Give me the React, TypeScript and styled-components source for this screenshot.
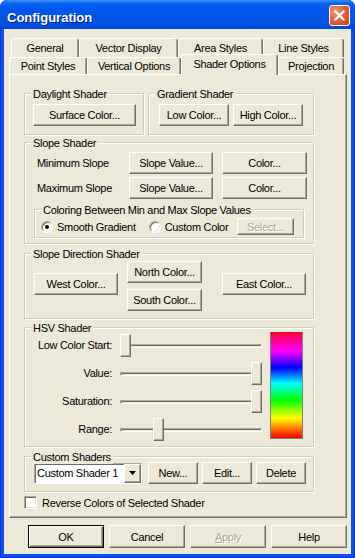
import React from "react";
import styled, { createGlobalStyle, css } from "styled-components";

const FACE = "#ECE9D8";
const SHADOW = "#ACA899";
const DARK = "#716F64";
const ETCH = "#D0D0BF";

const GlobalStyle = createGlobalStyle`
  * { box-sizing: border-box; }
  html, body { margin: 0; padding: 0; background: #ffffff; }
  body {
    font-family: "Liberation Sans", Arial, sans-serif;
    font-size: 11px;
    letter-spacing: -0.3px;
    color: #000;
  }
`;

const Window = styled.div`
  width: 355px;
  height: 558px;
  display: flex;
  flex-direction: column;
  background: #0A53E2;
  box-shadow: inset 0 0 0 1px #0831D9;
  border-radius: 7px 7px 0 0;
  overflow: hidden;
`;

const TitleBar = styled.div`
  flex: none;
  height: 29px;
  display: flex;
  align-items: flex-start;
  justify-content: space-between;
  padding: 0 5px 0 7px;
  border-radius: 7px 7px 0 0;
  background: linear-gradient(
    to bottom,
    #3D95FF 0px,
    #0A66F5 3px,
    #0058EE 7px,
    #0055E8 15px,
    #0052E2 24px,
    #0047D4 29px
  );
`;

const Title = styled.span`
  margin-top: 10px;
  font: bold 13px/15px "Liberation Sans", Arial, sans-serif;
  letter-spacing: 0;
  color: #fff;
  text-shadow: 1px 1px #0A1883;
`;

const CloseBtn = styled.div`
  margin-top: 5px;
  width: 21px;
  height: 21px;
  border: 1px solid #fff;
  border-radius: 3px;
  background: radial-gradient(circle at 30% 30%, #F29A7E 0%, #E2623F 45%, #C8401D 100%);
  display: flex;
  align-items: center;
  justify-content: center;
`;

const Client = styled.div`
  flex: 1;
  margin: 0 4px 4px 4px;
  background: ${FACE};
  display: flex;
  flex-direction: column;
  padding: 9px 4px 0 5px;
`;

const TabRow = styled.div<{ $indent: number }>`
  display: flex;
  padding-left: ${(p) => p.$indent}px;
`;

const Tab = styled.div<{ $w: number; $h: number; $active?: boolean }>`
  flex: none;
  width: ${(p) => p.$w}px;
  height: ${(p) => p.$h}px;
  display: flex;
  align-items: center;
  justify-content: center;
  white-space: nowrap;
  background: ${FACE};
  border-top: 1px solid #fff;
  border-left: 1px solid #fff;
  border-right: 1px solid ${DARK};
  border-radius: 3px 3px 0 0;
  box-shadow: inset -1px 0 ${SHADOW};
  ${(p) =>
    p.$active &&
    css`
      position: relative;
      z-index: 1;
      margin-top: -3px;
      margin-bottom: -1px;
      padding-bottom: 2px;
    `}
`;

const Panel = styled.div`
  flex: none;
  height: 444px;
  display: flex;
  flex-direction: column;
  padding: 18px 0 0 14px;
  border: 1px solid;
  border-color: #fff ${DARK} ${DARK} #fff;
  box-shadow: inset -1px -1px ${SHADOW};
`;

const GroupRow = styled.div`
  display: flex;
  gap: 4px;
`;

const Group = styled.div<{ $h: number; $w?: number; $mt?: number }>`
  position: relative;
  flex: none;
  width: ${(p) => p.$w ?? 290}px;
  height: ${(p) => p.$h}px;
  margin-top: ${(p) => p.$mt ?? 0}px;
  border: 1px solid ${ETCH};
  box-shadow: inset 1px 1px #fff, 1px 1px #fff;
`;

const Legend = styled.span`
  position: absolute;
  top: -6px;
  left: 6px;
  padding: 0 2px;
  line-height: 13px;
  background: ${FACE};
  white-space: nowrap;
`;

const Btn = styled.button<{ $w: number; $h?: number; $default?: boolean }>`
  flex: none;
  width: ${(p) => p.$w}px;
  height: ${(p) => p.$h ?? 22}px;
  margin: 0;
  padding: 0;
  font-family: "Liberation Sans", Arial, sans-serif;
  font-size: 11px;
  letter-spacing: inherit;
  color: #000;
  white-space: nowrap;
  background: ${FACE};
  border: 1px solid;
  border-color: #fff ${DARK} ${DARK} #fff;
  box-shadow: inset -1px -1px ${SHADOW};
  ${(p) =>
    p.$default &&
    css`
      border-color: #000;
      box-shadow: inset 1px 1px #fff, inset -1px -1px ${DARK}, inset -2px -2px ${SHADOW};
    `}
  &:disabled {
    color: ${SHADOW};
    text-shadow: 1px 1px #fff;
  }
`;

const ButtonLine = styled.div<{ $pt: number; $pl: number; $gap: number }>`
  display: flex;
  align-items: center;
  gap: ${(p) => p.$gap}px;
  padding: ${(p) => p.$pt}px 0 0 ${(p) => p.$pl}px;
`;

const SlopeBody = styled.div`
  display: flex;
  flex-direction: column;
  padding: 9px 0 0 9px;
`;

const SlopeGrid = styled.div`
  display: grid;
  grid-template-columns: 86px 84px 85px;
  grid-auto-rows: 22px;
  column-gap: 9px;
  row-gap: 3px;
  align-items: center;
`;

const RowLabel = styled.span`
  padding-left: 3px;
  white-space: nowrap;
`;

const RadioLine = styled.div`
  display: flex;
  align-items: center;
  padding: 8px 9px 0 6px;
`;

const RadioOption = styled.label<{ $mr?: number }>`
  display: flex;
  align-items: center;
  gap: 4px;
  margin-right: ${(p) => p.$mr ?? 0}px;
  white-space: nowrap;
`;

const RadioDot = styled.span<{ $checked?: boolean }>`
  position: relative;
  flex: none;
  width: 12px;
  height: 12px;
  border-radius: 50%;
  background: #fff;
  border: 1px solid;
  border-color: ${SHADOW} #fff #fff ${SHADOW};
  box-shadow: inset 1px 1px ${DARK}, inset -1px -1px ${FACE};
  ${(p) =>
    p.$checked &&
    css`
      &::after {
        content: "";
        position: absolute;
        left: 3px;
        top: 3px;
        width: 4px;
        height: 4px;
        border-radius: 50%;
        background: #000;
      }
    `}
`;

const Spacer = styled.div`
  flex: 1;
`;

const DirectionBody = styled.div`
  display: flex;
  align-items: flex-start;
  padding: 7px 0 0 9px;
`;

const SideSlot = styled.div`
  margin-top: 12px;
`;

const CenterStack = styled.div`
  display: flex;
  flex-direction: column;
  gap: 6px;
  margin: 0 20px 0 9px;
`;

const HsvBody = styled.div`
  display: flex;
  align-items: flex-start;
  gap: 8px;
  padding-top: 3px;
`;

const SliderGrid = styled.div`
  display: grid;
  grid-template-columns: 87px 142px;
  grid-auto-rows: 28px;
  column-gap: 8px;
  align-items: center;
`;

const SliderLabel = styled.span`
  text-align: right;
  white-space: nowrap;
`;

const Slider = styled.div`
  position: relative;
  height: 28px;
  padding-top: 13px;
`;

const Track = styled.div`
  height: 4px;
  border: 1px solid;
  border-color: ${SHADOW} #fff #fff ${SHADOW};
  box-shadow: inset 1px 1px ${DARK};
  background: ${FACE};
`;

const Thumb = styled.div`
  position: absolute;
  top: 3px;
  width: 11px;
  height: 23px;
  background: ${FACE};
  border: 1px solid;
  border-color: #fff ${DARK} ${DARK} #fff;
  box-shadow: inset -1px -1px ${SHADOW};
`;

const ColorBar = styled.div`
  flex: none;
  width: 33px;
  height: 107px;
  margin-top: 1px;
  border: 1px solid #808080;
  border-top-color: #ff0000;
  background: linear-gradient(
    to bottom,
    #ff0040 0%,
    #ff00ff 17%,
    #0000ff 33%,
    #00ffff 48%,
    #00ff00 64%,
    #ffff00 81%,
    #ff0000 100%
  );
`;

const Combo = styled.div`
  flex: none;
  width: 108px;
  height: 21px;
  margin-right: 2px;
  display: flex;
  align-items: flex-start;
  justify-content: space-between;
  background: #fff;
  border: 1px solid;
  border-color: ${SHADOW} #fff #fff ${SHADOW};
  box-shadow: inset 1px 1px ${DARK};
`;

const ComboText = styled.span`
  padding: 3px 0 0 2px;
  white-space: nowrap;
`;

const DropBtn = styled.div`
  flex: none;
  width: 17px;
  height: 19px;
  display: flex;
  align-items: center;
  justify-content: center;
  background: ${FACE};
  border: 1px solid;
  border-color: #fff ${DARK} ${DARK} #fff;
  box-shadow: inset -1px -1px ${SHADOW};
`;

const CheckRow = styled.label`
  display: flex;
  align-items: center;
  gap: 5px;
  margin-top: 4px;
  white-space: nowrap;
`;

const CheckBox = styled.span`
  flex: none;
  width: 13px;
  height: 13px;
  background: #fff;
  border: 1px solid;
  border-color: ${SHADOW} #fff #fff ${SHADOW};
  box-shadow: inset 1px 1px ${DARK}, inset -1px -1px ${FACE};
`;

const DialogButtons = styled.div`
  display: flex;
  justify-content: flex-end;
  gap: 5px;
  margin-top: 7px;
`;

const backTabs = [
  { label: "General", w: 68 },
  { label: "Vector Display", w: 99 },
  { label: "Area Styles", w: 85 },
  { label: "Line Styles", w: 81 },
];

const frontTabs = [
  { label: "Point Styles", w: 78 },
  { label: "Vertical Options", w: 94 },
  { label: "Shader Options", w: 97, active: true },
  { label: "Projection", w: 66 },
];

const sliders = [
  { label: "Low Color Start:", value: 0 },
  { label: "Value:", value: 1 },
  { label: "Saturation:", value: 1 },
  { label: "Range:", value: 0.25 },
];

const TRACK_RANGE = 142 - 11;

export default function App() {
  return (
    <>
      <GlobalStyle />
      <Window>
        <TitleBar>
          <Title>Configuration</Title>
          <CloseBtn>
            <svg width="11" height="11" viewBox="0 0 11 11">
              <path d="M1.5 1.5 L9.5 9.5 M9.5 1.5 L1.5 9.5" stroke="#fff" strokeWidth="2.2" strokeLinecap="square" />
            </svg>
          </CloseBtn>
        </TitleBar>
        <Client>
          <TabRow $indent={2}>
            {backTabs.map((t) => (
              <Tab key={t.label} $w={t.w} $h={19}>
                {t.label}
              </Tab>
            ))}
          </TabRow>
          <TabRow $indent={0}>
            {frontTabs.map((t) => (
              <Tab key={t.label} $w={t.w} $h={t.active ? 21 : 17} $active={t.active}>
                {t.label}
              </Tab>
            ))}
          </TabRow>
          <Panel>
            <GroupRow>
              <Group $w={120} $h={42}>
                <Legend>Daylight Shader</Legend>
                <ButtonLine $pt={10} $pl={8} $gap={0}>
                  <Btn $w={103}>Surface Color...</Btn>
                </ButtonLine>
              </Group>
              <Group $w={166} $h={42}>
                <Legend>Gradient Shader</Legend>
                <ButtonLine $pt={10} $pl={10} $gap={4}>
                  <Btn $w={70}>Low Color...</Btn>
                  <Btn $w={70}>High Color...</Btn>
                </ButtonLine>
              </Group>
            </GroupRow>

            <Group $h={102} $mt={7}>
              <Legend>Slope Shader</Legend>
              <SlopeBody>
                <SlopeGrid>
                  <RowLabel>Minimum Slope</RowLabel>
                  <Btn $w={84}>Slope Value...</Btn>
                  <Btn $w={85}>Color...</Btn>
                  <RowLabel>Maximum Slope</RowLabel>
                  <Btn $w={84}>Slope Value...</Btn>
                  <Btn $w={85}>Color...</Btn>
                </SlopeGrid>
                <Group $w={270} $h={29} $mt={10}>
                  <Legend>Coloring Between Min and Max Slope Values</Legend>
                  <RadioLine>
                    <RadioOption $mr={13}>
                      <RadioDot $checked />
                      Smooth Gradient
                    </RadioOption>
                    <RadioOption>
                      <RadioDot />
                      Custom Color
                    </RadioOption>
                    <Spacer />
                    <Btn $w={57} $h={17} disabled>
                      Select...
                    </Btn>
                  </RadioLine>
                </Group>
              </SlopeBody>
            </Group>

            <Group $h={66} $mt={9}>
              <Legend>Slope Direction Shader</Legend>
              <DirectionBody>
                <SideSlot>
                  <Btn $w={84}>West Color...</Btn>
                </SideSlot>
                <CenterStack>
                  <Btn $w={75}>North Color...</Btn>
                  <Btn $w={75}>South Color...</Btn>
                </CenterStack>
                <SideSlot>
                  <Btn $w={84}>East Color...</Btn>
                </SideSlot>
              </DirectionBody>
            </Group>

            <Group $h={120} $mt={8}>
              <Legend>HSV Shader</Legend>
              <HsvBody>
                <SliderGrid>
                  {sliders.map((s) => (
                    <React.Fragment key={s.label}>
                      <SliderLabel>{s.label}</SliderLabel>
                      <Slider>
                        <Track />
                        <Thumb style={{ left: Math.round(s.value * TRACK_RANGE) }} />
                      </Slider>
                    </React.Fragment>
                  ))}
                </SliderGrid>
                <ColorBar />
              </HsvBody>
            </Group>

            <Group $h={36} $mt={9}>
              <Legend>Custom Shaders</Legend>
              <ButtonLine $pt={5} $pl={9} $gap={4}>
                <Combo>
                  <ComboText>Custom Shader 1</ComboText>
                  <DropBtn>
                    <svg width="7" height="4" viewBox="0 0 7 4">
                      <path d="M0 0 H7 L3.5 4 Z" fill="#000" />
                    </svg>
                  </DropBtn>
                </Combo>
                <Btn $w={50}>New...</Btn>
                <Btn $w={50}>Edit...</Btn>
                <Btn $w={50}>Delete</Btn>
              </ButtonLine>
            </Group>

            <CheckRow>
              <CheckBox />
              Reverse Colors of Selected Shader
            </CheckRow>
          </Panel>
          <DialogButtons>
            <Btn $w={76} $h={23} $default>
              OK
            </Btn>
            <Btn $w={76} $h={23}>
              Cancel
            </Btn>
            <Btn $w={76} $h={23} disabled>
              <u>A</u>pply
            </Btn>
            <Btn $w={76} $h={23}>
              Help
            </Btn>
          </DialogButtons>
        </Client>
      </Window>
    </>
  );
}
